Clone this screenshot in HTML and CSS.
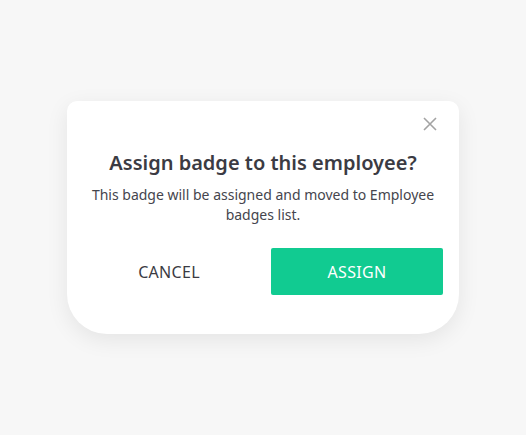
FILE: index.html
```html
<!DOCTYPE html>
<html>
<head>
<meta charset="utf-8">
<link rel="stylesheet" href="styles.css">
</head>
<body>
<div class="dialog">
  <div class="dialog-top">
    <button class="close" aria-label="Close">
      <svg width="14" height="14" viewBox="0 0 14 14"><path d="M1 1L13 13M13 1L1 13" stroke="#a3a3a3" stroke-width="1.6" fill="none"/></svg>
    </button>
  </div>
  <h2 class="title">Assign badge to this employee?</h2>
  <p class="text">This badge will be assigned and moved to Employee badges list.</p>
  <div class="actions">
    <button class="btn btn-cancel">CANCEL</button>
    <button class="btn btn-assign">ASSIGN</button>
  </div>
</div>
</body>
</html>
```
FILE: styles.css
```css
html, body {
  margin: 0;
  padding: 0;
}
body {
  background: #f7f7f7;
  width: 526px;
  height: 435px;
  font-family: "Noto Sans", "Open Sans", sans-serif;
  overflow: hidden;
}
.dialog {
  box-sizing: border-box;
  margin: 101px 0 0 67px;
  width: 392px;
  background: #fff;
  border-radius: 10px 10px 40px 40px;
  box-shadow: 0 6px 22px rgba(0, 0, 0, 0.08);
  padding: 16px 16px 39px 16px;
}
.dialog-top {
  display: flex;
  justify-content: flex-end;
  height: 14px;
  padding-right: 6px;
}
.close {
  border: 0;
  background: none;
  padding: 0;
  width: 14px;
  height: 14px;
  display: flex;
  cursor: pointer;
}
.title {
  margin: 18px 0 0;
  text-align: center;
  font-size: 20px;
  line-height: 28px;
  font-weight: 600;
  color: #3b3b43;
}
.text {
  margin: 8px 0 0;
  text-align: center;
  font-size: 14px;
  line-height: 20px;
  color: #45454d;
  padding: 0 8px;
}
.actions {
  margin-top: 23px;
  display: grid;
  grid-template-columns: 1fr 1fr;
  gap: 16px;
}
.btn {
  height: 47px;
  border: 0;
  border-radius: 2px;
  font-family: inherit;
  font-size: 16px;
  letter-spacing: 0.3px;
  cursor: pointer;
}
.btn-cancel {
  background: transparent;
  color: #3b3b43;
}
.btn-assign {
  background: #11cb91;
  color: #fff;
}
```
